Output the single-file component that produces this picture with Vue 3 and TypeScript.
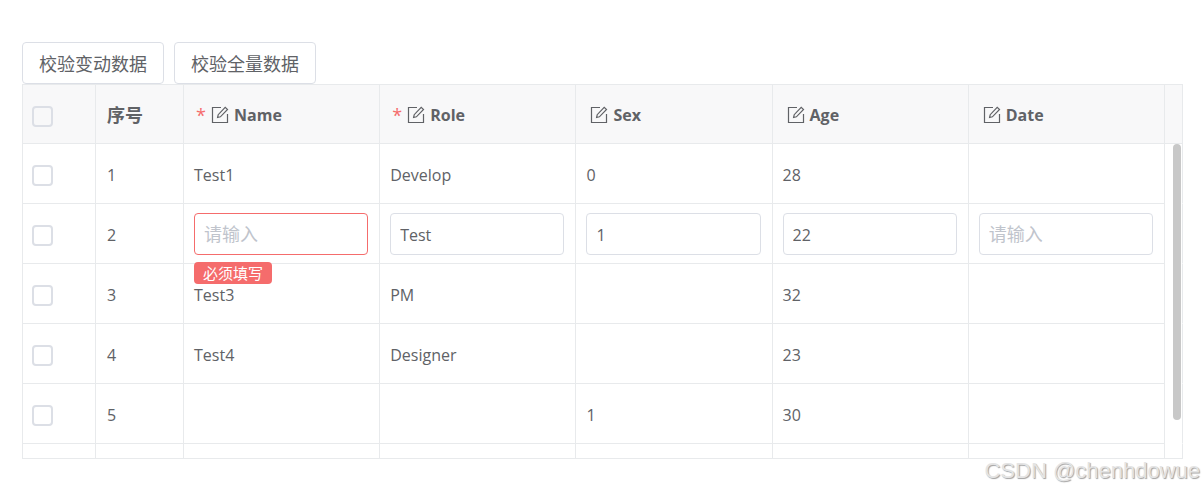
<script setup lang="ts">
import { reactive } from 'vue'

type Field = 'name' | 'role' | 'sex' | 'age' | 'date'

interface Column {
  field: Field
  title: string
  required: boolean
}

interface Row {
  id: string
  editing: boolean
  values: Record<Field, string>
}

const columns: Column[] = [
  { field: 'name', title: 'Name', required: true },
  { field: 'role', title: 'Role', required: true },
  { field: 'sex', title: 'Sex', required: false },
  { field: 'age', title: 'Age', required: false },
  { field: 'date', title: 'Date', required: false },
]

const rows = reactive<Row[]>([
  { id: '1', editing: false, values: { name: 'Test1', role: 'Develop', sex: '0', age: '28', date: '' } },
  { id: '2', editing: true, values: { name: '', role: 'Test', sex: '1', age: '22', date: '' } },
  { id: '3', editing: false, values: { name: 'Test3', role: 'PM', sex: '', age: '32', date: '' } },
  { id: '4', editing: false, values: { name: 'Test4', role: 'Designer', sex: '', age: '23', date: '' } },
  { id: '5', editing: false, values: { name: '', role: '', sex: '1', age: '30', date: '' } },
])

function invalid(row: Row, column: Column): boolean {
  return row.editing && column.required && row.values[column.field] === ''
}
</script>

<template>
  <main class="page">
    <div class="toolbar">
      <button type="button" class="btn">校验变动数据</button>
      <button type="button" class="btn">校验全量数据</button>
    </div>

    <div class="grid">
      <table>
        <colgroup>
          <col class="col-check" />
          <col class="col-index" />
          <col v-for="column in columns" :key="column.field" />
          <col class="col-gutter" />
        </colgroup>
        <thead>
          <tr>
            <th class="check"><input type="checkbox" aria-label="全选" /></th>
            <th class="index">序号</th>
            <th v-for="column in columns" :key="column.field">
              <span class="title" :class="{ required: column.required }">
                <span v-if="column.required" class="star">*</span>
                <svg class="edit" viewBox="0 0 18 18" aria-hidden="true">
                  <path d="M10 1.5H1.5V16.5H16.5V8" />
                  <path d="M6.6 11.5L7.2 8.7L14.2 1.4L16.5 3.5L9.4 10.8Z" />
                </svg>
                <span>{{ column.title }}</span>
              </span>
            </th>
            <th class="gutter"></th>
          </tr>
        </thead>
        <tbody>
          <tr v-for="row in rows" :key="row.id">
            <td class="check"><input type="checkbox" :aria-label="row.id" /></td>
            <td class="index">{{ row.id }}</td>
            <td v-for="column in columns" :key="column.field" :class="{ editing: row.editing }">
              <div v-if="row.editing" class="editor">
                <input
                  v-model="row.values[column.field]"
                  type="text"
                  class="field"
                  :class="{ error: invalid(row, column) }"
                  :aria-label="column.title"
                  placeholder="请输入"
                />
                <span v-if="invalid(row, column)" class="message">必须填写</span>
              </div>
              <template v-else>{{ row.values[column.field] }}</template>
            </td>
            <td class="gutter"></td>
          </tr>
          <tr>
            <td></td>
            <td></td>
            <td v-for="column in columns" :key="column.field"></td>
            <td class="gutter"></td>
          </tr>
        </tbody>
      </table>
      <div class="thumb"></div>
    </div>

    <div class="watermark">CSDN @chenhdowue</div>
  </main>
</template>

<style>
body {
  background: #fff;
}
</style>

<style scoped>
.page {
  position: relative;
  box-sizing: border-box;
  min-height: 100vh;
  padding: 42px 21px 31px 22px;
  color: #606266;
  font-family: 'Open Sans', 'Noto Sans CJK SC', sans-serif;
  font-size: 16px;
}

.toolbar {
  display: flex;
  gap: 10px;
}

.btn {
  box-sizing: border-box;
  height: 42px;
  padding: 0 16px;
  border: 1px solid #dcdfe6;
  border-radius: 4px;
  background: #fff;
  color: #606266;
  font-family: 'Noto Sans CJK SC', sans-serif;
  font-size: 18px;
}

.grid {
  position: relative;
  box-sizing: border-box;
  max-height: 375px;
  overflow: hidden;
  border: 1px solid #e8eaec;
  border-right: 0;
}

table {
  width: 100%;
  table-layout: fixed;
  border-collapse: separate;
  border-spacing: 0;
}

.col-check {
  width: 73px;
}

.col-index {
  width: 88px;
}

.col-gutter {
  width: 18px;
}

th,
td {
  box-sizing: border-box;
  height: 60px;
  padding: 2px 11px 0 10px;
  border-right: 1px solid #e8eaec;
  border-bottom: 1px solid #e8eaec;
  text-align: left;
  vertical-align: middle;
  line-height: 24px;
}

th {
  height: 59px;
  background: #f8f8f9;
  font-weight: 700;
}

td.gutter {
  border-bottom-color: transparent;
}

td.editing {
  padding-top: 0;
}

.index {
  padding-left: 11px;
}

th.index {
  font-size: 18px;
}

.check {
  padding: 4px 9px 0;
}

.check input {
  display: block;
  appearance: none;
  box-sizing: border-box;
  width: 21px;
  height: 21px;
  margin: 0;
  border: 2px solid #dcdfe6;
  border-radius: 4px;
  background: #fff;
}

th.check input {
  background: transparent;
}

.title {
  display: flex;
  align-items: center;
  gap: 5px;
  padding-left: 4px;
}

.title.required {
  padding-left: 2px;
}

.star {
  width: 8px;
  margin-right: 2px;
  color: #f56c6c;
  font-weight: 400;
  font-size: 18px;
}

.edit {
  width: 18px;
  height: 18px;
  fill: none;
  stroke: #606266;
  stroke-width: 1.2;
}

.editor {
  position: relative;
}

.field {
  display: block;
  box-sizing: border-box;
  width: 100%;
  height: 42px;
  padding: 3px 9px 0;
  border: 1px solid #dcdfe6;
  border-radius: 4px;
  outline: 0;
  background: #fff;
  color: #606266;
  font: inherit;
}

.field::placeholder {
  color: #c0c4cc;
  font-family: 'Noto Sans CJK SC', sans-serif;
  font-size: 18px;
}

.field.error {
  border-color: #f56c6c;
}

.message {
  position: absolute;
  z-index: 1;
  top: 100%;
  left: 0;
  margin-top: 7px;
  padding: 0 9px;
  border-radius: 4px;
  background: #f56c6c;
  color: #fff;
  font-size: 15px;
  line-height: 22px;
  white-space: nowrap;
}

.thumb {
  position: absolute;
  top: 59px;
  right: 2px;
  width: 8px;
  height: 276px;
  border-radius: 4px;
  background: #c8c8c8;
}

.watermark {
  position: absolute;
  right: 4px;
  bottom: 6px;
  color: #e4e4e4;
  font-family: 'Liberation Sans', Arial, sans-serif;
  font-size: 22px;
  line-height: 26px;
  text-shadow: 1px 1px 1px #a0a0a0;
}
</style>
